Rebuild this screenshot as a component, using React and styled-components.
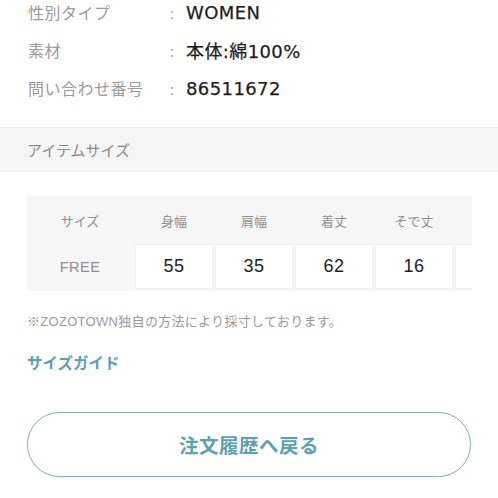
import React from "react";
import styled, { createGlobalStyle } from "styled-components";

const GlobalStyle = createGlobalStyle`
  html, body {
    margin: 0;
    padding: 0;
    background: #fff;
    font-family: "Noto Sans CJK JP", "Noto Sans", sans-serif;
  }
`;

const Page = styled.div`
  width: 498px;
  height: 498px;
  overflow: hidden;
  background: #fff;
`;

const InfoList = styled.dl`
  margin: -7px 0 0;
  padding: 0 28px;
`;

const InfoRow = styled.div`
  display: grid;
  grid-template-columns: 142px 16px 1fr;
  align-items: center;
  height: 38px;
`;

const Label = styled.dt`
  font-size: 16px;
  color: #9a9a9a;
  letter-spacing: 0.5px;
`;

const Colon = styled.span`
  font-size: 15px;
  color: #aaa;
`;

const Value = styled.dd`
  margin: 0;
  font-size: 18px;
  font-weight: 400;
  color: #1e1e1e;
  letter-spacing: 0.4px;
  -webkit-text-stroke: 0.25px #1e1e1e;
  font-family: "DejaVu Sans", "Noto Sans CJK JP", sans-serif;
`;

const SectionBand = styled.div`
  margin-top: 20px;
  height: 45px;
  background: #f5f5f5;
  border-top: 1px solid #efefef;
  border-bottom: 1px solid #efefef;
  display: flex;
  align-items: center;
  padding-left: 27px;
  box-sizing: border-box;
  font-size: 15px;
  color: #8a8a8a;
`;

const Body = styled.div`
  padding: 24px 26px 0 27px;
`;

const TableWrap = styled.div`
  width: 445px;
  overflow: hidden;
  background: #f6f6f6;
  padding-bottom: 2px;
`;

const SizeRow = styled.div`
  display: flex;
  gap: 2px;
  height: ${(p) => p.$h}px;
  align-items: stretch;
`;

const HeadCell = styled.div`
  flex: 0 0 ${(p) => (p.$first ? 106 : 78)}px;
  display: flex;
  align-items: center;
  justify-content: center;
  font-size: 13px;
  color: #8f8f8f;
`;

const DataCell = styled.div`
  flex: 0 0 ${(p) => (p.$first ? 106 : 78)}px;
  box-sizing: border-box;
  display: flex;
  align-items: center;
  justify-content: center;
  background: ${(p) => (p.$first ? "transparent" : "#fff")};
  border: ${(p) => (p.$first ? "none" : "1px solid #f0f0f0")};
  font-size: ${(p) => (p.$first ? 14.5 : 18)}px;
  color: ${(p) => (p.$first ? "#8f8f8f" : "#222")};
  letter-spacing: 0.5px;
  font-family: "Liberation Sans", Arial, sans-serif;
`;

const Note = styled.p`
  margin: 22px 0 0;
  font-size: 13px;
  color: #9a9a9a;
  line-height: 18px;
  letter-spacing: 0.3px;
  font-family: "Liberation Sans", "Noto Sans CJK JP", sans-serif;
`;

const GuideLink = styled.a`
  display: block;
  margin-top: 22px;
  font-size: 15.5px;
  font-weight: 700;
  color: #5aa0b0;
  text-decoration: none;
  line-height: 18px;
`;

const BackButton = styled.button`
  display: flex;
  align-items: center;
  justify-content: center;
  width: 444px;
  height: 65px;
  margin-top: 41px;
  border: 1px solid #86aeb8;
  border-radius: 33px;
  background: #fff;
  font-family: inherit;
  font-size: 19.5px;
  font-weight: 700;
  color: #58a2b4;
  letter-spacing: 0.5px;
  box-shadow: 0 1px 3px rgba(0, 0, 0, 0.05);
`;

const info = [
  ["性別タイプ", "WOMEN"],
  ["素材", "本体:綿100%"],
  ["問い合わせ番号", "86511672"],
];

const heads = ["サイズ", "身幅", "肩幅", "着丈", "そで丈", ""];
const values = ["FREE", "55", "35", "62", "16", ""];

export default function App() {
  return (
    <Page>
      <GlobalStyle />
      <InfoList>
        {info.map(([k, v]) => (
          <InfoRow key={k}>
            <Label>{k}</Label>
            <Colon>:</Colon>
            <Value>{v}</Value>
          </InfoRow>
        ))}
      </InfoList>
      <SectionBand>アイテムサイズ</SectionBand>
      <Body>
        <TableWrap>
          <SizeRow $h={48}>
            {heads.map((h, i) => (
              <HeadCell key={i} $first={i === 0}>
                {h}
              </HeadCell>
            ))}
          </SizeRow>
          <SizeRow $h={45}>
            {values.map((v, i) => (
              <DataCell key={i} $first={i === 0}>
                {v}
              </DataCell>
            ))}
          </SizeRow>
        </TableWrap>
        <Note>※ZOZOTOWN独自の方法により採寸しております。</Note>
        <GuideLink href="#">サイズガイド</GuideLink>
        <BackButton>注文履歴へ戻る</BackButton>
      </Body>
    </Page>
  );
}
